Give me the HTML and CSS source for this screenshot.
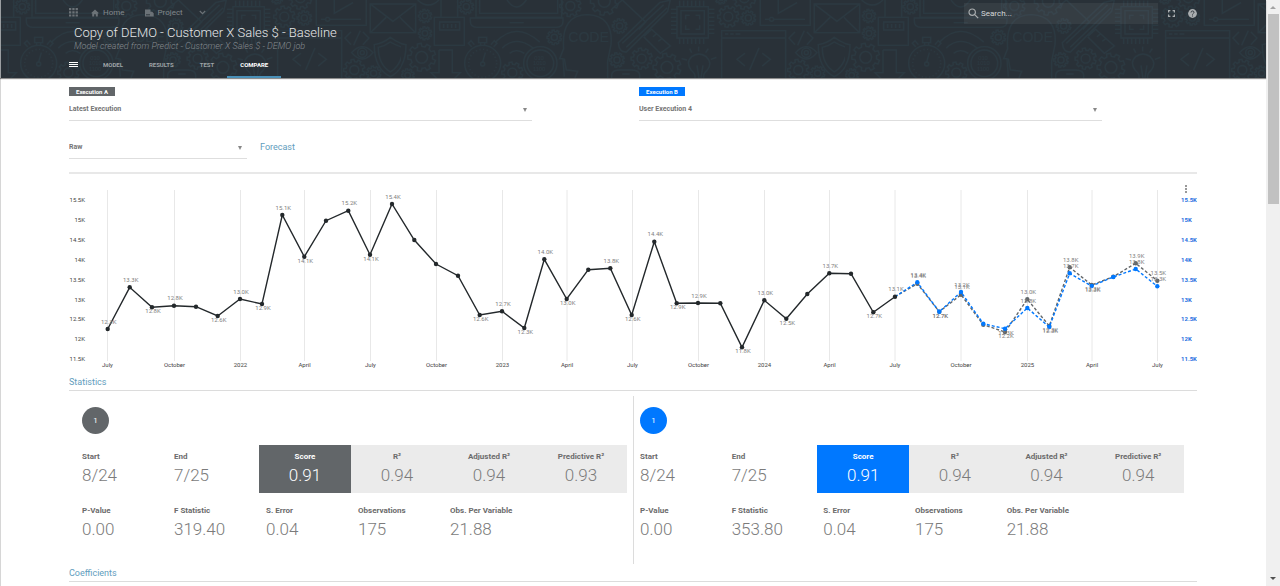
FILE: index.html
```html
<!DOCTYPE html>
<html lang="en">
<head>
<meta charset="utf-8">
<title>Copy of DEMO - Customer X Sales $ - Baseline</title>
<link rel="stylesheet" href="styles.css">
</head>
<body>
<div class="app">
  <div class="page">
    <header class="header">
      <svg class="header-art" aria-hidden="true">
        <defs>
          <pattern id="tech" width="444" height="78" patternUnits="userSpaceOnUse" patternTransform="translate(-44 0)">
            <g id="tech-tile" class="tile" transform="scale(.3333)">
              <path d="M1240 12h137v86h-137zM1240 12l68 52 69-52M1240 98l48-46M1377 98l-48-46M-93 12H44v86H-93M44 12L-24 64M44 98L-4 52"/>
              <path d="M50 0q32 30 64 0M120 0v52h50V0M100 52h90v84h-90zM116 66h60v24h-60zM128 72v12M140 72v12M152 72v12M164 72v12M114 150h40v68h24l-30 30M114 150v68H90l30 30"/>
              <path d="M225 0v52h257V0M236 0v40h234V0M208 54h278v10q0 18-20 18H228q-20 0-20-18zM326 68h42M318 0q28 42 58 0"/>
              <circle cx="245" cy="190" r="54"/><circle cx="245" cy="190" r="42" stroke-dasharray="3 8"/><circle cx="245" cy="192" r="6"/><path d="M245 186l8-28M233 112h24v16h-24zM239 128v10M251 128v10M212 140l-10-10 8-8 10 12M278 140l10-10-8-8-10 12"/>
              <path d="M284 126q62-64 132 0M304 144q42-40 92 0M326 160q20-16 44 0"/>
              <circle cx="418" cy="190" r="50"/><circle cx="418" cy="190" r="40"/>
              <path d="M490 230l-4-54h-10l12-30q-8-102 72-102 78 4 70 90l-10 50v50M490 176l6 34 34 4-8 20"/>
              <text x="502" y="126" class="tile-code">CODE</text>
              <text x="400" y="180" class="tile-bits">010</text><text x="396" y="196" class="tile-bits">1010</text><text x="396" y="212" class="tile-bits">1100</text>
              <path d="M652 128L776 8l32-8-8 34-124 122q-22 2-24-28zM664 130L788 14M676 142L798 24M640 20l24-20 70 66-20 22M730 108l22-20 56 50-30 22-50-50M756 110l10-8M772 124l10-8"/>
              <path d="M828 20h94v94h-94zM840 32h70v70h-70zM854 58V46h12M884 46h12v12M854 76v12h12M884 88h12V76M810 28h18M810 40h18M810 52h18M810 64h18M810 76h18M810 88h18M810 100h18M922 28h18M922 40h18M922 52h18M922 64h18M922 76h18M922 88h18M922 100h18M836 2v18M848 2v18M860 2v18M872 2v18M884 2v18M896 2v18M908 2v18M836 114v18M848 114v18M860 114v18M872 114v18M884 114v18M896 114v18M908 114v18"/>
              <path d="M632 234v-8q0-16 24-16h36q24 0 24 16v8M664 222h22M882 234q2-14-12-24-16-24 2-40 22-16 44 0 20 20 2 42-12 8-10 22M888 196l6 38M906 196l-6 38M893 140v14M866 146l6 12M922 146l-8 12M842 176l16 4M946 172l-16 6"/>
              <path d="M962 234V92h192v142M962 114h192M972 102h10M988 102h10M1004 102h14M1032 160l-24 18 24 20M1084 160l24 18-24 20M1074 144l-28 66"/>
              <path d="M1078 0v76h150V0M1132 0v40l56-32M1092 58h14M1118 58h94M1182 96l-18 18 18 20M1218 96l18 18-18 20M1210 92l-20 44M1184 158q32-36 64 0-32 38-64 0z"/>
              <circle cx="1112" cy="58" r="6"/><circle cx="1216" cy="158" r="14"/><circle cx="1216" cy="158" r="6"/>
              <path d="M1252 134q28-4 48-22 22 18 48 22 0 72-48 96-48-24-48-96zM1264 142q20-4 36-16 20 12 38 16-2 52-38 74-36-22-36-74zM-81 134Q-53 130-33 112-11 130 15 134q0 72-48 96"/>
            </g>
          </pattern>
        </defs>
        <rect width="100%" height="100%" fill="url(#tech)"/>
      </svg>
      <div class="topbar">
        <nav class="crumbs" aria-label="Breadcrumb">
          <button class="icon-btn" aria-label="Apps"><svg width="9" height="9" viewBox="0 0 9 9"><path d="M0 0h2.3v2.2H0zM3.3 0h2.3v2.2H3.3zM6.6 0h2.3v2.2H6.6zM0 3.2h2.3v2.2H0zM3.3 3.2h2.3v2.2H3.3zM6.6 3.2h2.3v2.2H6.6zM0 6.4h2.3v2.2H0zM3.3 6.4h2.3v2.2H3.3zM6.6 6.4h2.3v2.2H6.6z"/></svg></button>
          <a class="crumb crumb-home" href="#"><svg width="8" height="8" viewBox="0 0 8 8"><path d="M4 .5L0 4.3h1.2v3.2h2V5.2h1.6v2.3h2V4.3H8z"/></svg>Home</a>
          <a class="crumb crumb-project" href="#"><svg width="9" height="8" viewBox="0 0 9 8"><path d="M0 .5h5.5v2.300h1.700l1.500 1.500v3.200H0z"/><path class="cut" d="M1 5.800h4"/></svg>Project</a>
          <button class="icon-btn crumb-more" aria-label="More"><svg class="line" width="7" height="5" viewBox="0 0 7 5"><path d="M.8 1l2.7 2.6L6.2 1"/></svg></button>
        </nav>
        <div class="tools">
          <label class="search"><svg class="line" width="11" height="11" viewBox="0 0 11 11"><circle cx="4.2" cy="4.2" r="3.2"/><path d="M6.7 6.7l3.5 3.5"/></svg><input type="text" placeholder="Search..." aria-label="Search"></label>
          <button class="icon-btn" aria-label="Full screen"><svg class="line" width="7" height="7" viewBox="0 0 7 7"><path d="M.6 2.4V.6h1.8M4.6.6h1.8v1.8M6.4 4.6v1.8H4.6M2.4 6.4H.6V4.6"/></svg></button>
          <button class="icon-btn help" aria-label="Help"><svg width="9" height="9" viewBox="0 0 9 9"><circle cx="4.5" cy="4.5" r="4.4"/><path class="cut" d="M3 3.5q.1-1.5 1.5-1.5T6 3.3q0 .7-.8 1.2-.7.4-.7 1.1M4.500 6.500v1"/></svg></button>
        </div>
      </div>
      <h1 class="title">Copy of DEMO - Customer X Sales $ - Baseline</h1>
      <p class="subtitle">Model created from Predict - Customer X Sales $ - DEMO job</p>
      <nav class="tabs" aria-label="Sections">
        <button class="menu-btn" aria-label="Menu"><span></span><span></span><span></span></button>
        <a class="tab" href="#">MODEL</a><a class="tab" href="#">RESULTS</a><a class="tab" href="#">TEST</a><a class="tab tab-active" href="#">COMPARE</a>
      </nav>
    </header>

    <main class="content">
      <div class="executions">
        <div class="field">
          <label class="badge badge-a" for="exec-a">Execution A</label>
          <div class="select"><select id="exec-a"><option>Latest Execution</option></select><i></i></div>
        </div>
        <div class="field">
          <label class="badge badge-b" for="exec-b">Execution B</label>
          <div class="select"><select id="exec-b"><option>User Execution 4</option></select><i></i></div>
        </div>
      </div>
      <div class="view-row">
        <div class="select view-select"><select aria-label="Data view"><option>Raw</option></select><i></i></div>
        <a class="forecast" href="#">Forecast</a>
      </div>
      <hr class="rule">
      <section class="chart">
        <svg id="chart" viewBox="69 185 1128 188" role="img" aria-label="Forecast chart"></svg>
        <button class="chart-menu" aria-label="Chart menu"><span></span><span></span><span></span></button>
      </section>

      <h2 class="section-title">Statistics</h2>
      <div class="panels">
        <section class="panel panel-a">
          <div class="marker">1</div>
          <dl class="stats">
            <div><dt>Start</dt><dd>8/24</dd></div>
            <div><dt>End</dt><dd>7/25</dd></div>
            <div class="score"><dt>Score</dt><dd>0.91</dd></div>
            <div class="fit"><dt>R²</dt><dd>0.94</dd></div>
            <div class="fit"><dt>Adjusted R²</dt><dd>0.94</dd></div>
            <div class="fit"><dt>Predictive R²</dt><dd>0.93</dd></div>
            <div><dt>P-Value</dt><dd>0.00</dd></div>
            <div><dt>F Statistic</dt><dd>319.40</dd></div>
            <div><dt>S. Error</dt><dd>0.04</dd></div>
            <div><dt>Observations</dt><dd>175</dd></div>
            <div><dt>Obs. Per Variable</dt><dd>21.88</dd></div>
          </dl>
        </section>
        <section class="panel panel-b">
          <div class="marker">1</div>
          <dl class="stats">
            <div><dt>Start</dt><dd>8/24</dd></div>
            <div><dt>End</dt><dd>7/25</dd></div>
            <div class="score"><dt>Score</dt><dd>0.91</dd></div>
            <div class="fit"><dt>R²</dt><dd>0.94</dd></div>
            <div class="fit"><dt>Adjusted R²</dt><dd>0.94</dd></div>
            <div class="fit"><dt>Predictive R²</dt><dd>0.94</dd></div>
            <div><dt>P-Value</dt><dd>0.00</dd></div>
            <div><dt>F Statistic</dt><dd>353.80</dd></div>
            <div><dt>S. Error</dt><dd>0.04</dd></div>
            <div><dt>Observations</dt><dd>175</dd></div>
            <div><dt>Obs. Per Variable</dt><dd>21.88</dd></div>
          </dl>
        </section>
      </div>
      <h2 class="section-title">Coefficients</h2>
    </main>
  </div>
  <div class="scrollbar" aria-hidden="true"><i class="arrow-up"></i><div class="thumb"></div><i class="arrow-down"></i></div>
</div>
<script src="script.js"></script>
</body>
</html>
```
FILE: styles.css
```css
* { box-sizing: border-box; }
body { margin: 0; font-family: Roboto, "Liberation Sans", sans-serif; color: #6b6b6b; background: #fff; }
button { border: 0; padding: 0; background: none; font: inherit; color: inherit; cursor: pointer; }
a { color: inherit; text-decoration: none; }
svg { display: block; }

.app { display: flex; min-height: 100vh; }
.page { flex: 1; min-width: 0; border-left: 1px solid #d6d6d6; }

/* Header */
.header { position: relative; display: flex; flex-direction: column; height: 78px; margin-left: -1px; padding: 0 69px 0 68px; background: #293138; color: #8b9196; border-left: 1px solid #9a9ea1; box-shadow: 0 1px 1px rgba(0, 0, 0, .45); }
.header-art { position: absolute; inset: 0; width: 100%; height: 100%; }
.tile { fill: none; stroke: #2b3941; stroke-width: 4; }
.tile-code, .tile-bits { font-family: "Liberation Sans", sans-serif; fill: #2b3941; stroke: none; }
.tile-code { font-size: 42px; }
.tile-bits { font-size: 17px; }
.topbar, .title, .subtitle, .tabs { position: relative; }
.topbar { display: flex; justify-content: space-between; height: 25px; }
.crumbs { display: flex; align-items: center; font-size: 8px; color: #82888c; }
.crumbs svg { opacity: .75; }
.crumbs svg, .tools svg { fill: currentColor; }
.crumbs .line, .tools .line { fill: none; stroke: currentColor; stroke-width: 1.2; }
.cut { fill: none; stroke: #293138; stroke-width: .9; }
.crumb { display: flex; align-items: center; gap: 4px; }
.crumb-home { margin-left: 13px; }
.crumb-project { margin-left: 20px; }
.crumb-more { margin-left: 16px; }
.tools { display: flex; align-items: center; padding-top: 2px; color: #a9adaf; }
.help { margin-left: 13px; }
.search { display: flex; align-items: center; gap: 2px; width: 194px; height: 21px; margin-right: 10px; padding-left: 4px; background: rgba(255, 255, 255, .06); }
.search input { flex: 1; min-width: 0; border: 0; padding: 0; outline: 0; background: none; font: 8px/12px Roboto, sans-serif; color: #d4d6d7; }
.search input::placeholder { color: #d4d6d7; opacity: 1; }
.title { margin: 0 0 0 5px; font-size: 13px; line-height: 16px; font-weight: 300; color: #e6e8e9; }
.subtitle { margin: 0 0 0 5px; font-size: 9px; line-height: 10px; font-weight: 300; font-style: italic; color: #868c90; }
.tabs { display: flex; flex: 1; }
.menu-btn { display: flex; flex-direction: column; justify-content: center; gap: 1px; width: 9px; margin-right: 12px; }
.menu-btn span { height: 1px; width: 9px; background: #fff; }
.tab { display: flex; align-items: center; padding: 1px 13px 0; border-bottom: 2px solid transparent; font-size: 6px; font-weight: 700; color: #9da2a5; }
.tab-active { color: #fff; border-color: #4990b8; }

/* Filters */
.content { padding: 9px 69px 4px 68px; }
.executions { display: grid; grid-template-columns: 1fr 1fr; column-gap: 107px; padding-right: 95px; }
.field { display: flex; flex-direction: column; align-items: flex-start; gap: 4px; }
.badge { width: 46px; font-size: 6px; line-height: 9px; font-weight: 700; color: #fff; text-align: center; }
.badge-a { background: #626669; }
.badge-b { background: #0078ff; }
.select { display: grid; width: 100%; height: 21px; border-bottom: 1px solid #dedede; }
.select select, .select i { grid-area: 1 / 1; }
.select select { appearance: none; width: 100%; border: 0; padding: 0 12px 2px 0; outline: 0; background: none; font: 700 7px/18px Roboto, sans-serif; color: #757575; }
.select i { align-self: center; justify-self: end; margin-right: 5px; border: 2px solid transparent; border-top: 4px solid #888; border-bottom: 0; pointer-events: none; }
.view-row { display: flex; align-items: center; gap: 13px; margin-top: 17px; }
.view-select { width: 178px; }
.forecast { padding-bottom: 3px; font-size: 9px; color: #5f9dbd; }
.rule { height: 2px; margin: 13px 0 11px; border: 0; background: #e8e8e8; }

/* Chart */
.chart { position: relative; }
.chart > svg { width: 100%; height: auto; }
.chart text { font-family: Roboto, sans-serif; font-size: 6px; }
.grid-line { stroke: #e8e8e8; stroke-width: 1; }
.axis { fill: #444; text-anchor: middle; }
.axis-left { fill: #444; text-anchor: end; }
.axis-right { fill: #1f6fe0; font-weight: 700; }
.point-label { fill: #808080; text-anchor: middle; }
.series { fill: none; stroke-width: 1.4; }
.actual { stroke: #23282b; }
.forecast-a { stroke: #626669; stroke-dasharray: 3 2; }
.forecast-b { stroke: #0078ff; stroke-dasharray: 3 2; }
.dot-actual { fill: #23282b; }
.dot-a { fill: #626669; }
.dot-b { fill: #0078ff; }
.chart-menu { position: absolute; top: 0; right: 8px; display: grid; gap: 1px; width: 6px; justify-items: center; }
.chart-menu span { width: 2px; height: 2px; background: #999; }

/* Statistics */
.section-title { margin: 4px 0 0; padding-bottom: 2px; border-bottom: 1px solid #dcdcdc; font-size: 9px; line-height: 11px; font-weight: 400; color: #5f9dbd; }
.panels { display: grid; grid-template-columns: 1fr 1fr; margin-top: 5px; }
.panel { padding: 11px 6px 17px; }
.panel-b { padding: 11px 13px 17px 0; border-left: 1px solid #dcdcdc; }
.marker { display: grid; place-items: center; width: 27px; height: 27px; margin: 0 0 11px 6px; border-radius: 50%; font-size: 8px; color: #fff; }
.stats { display: grid; grid-template-columns: repeat(6, 1fr); row-gap: 6px; margin: 0; }
.stats > div { height: 48px; padding: 5px 0 0 6px; }
.panel-a .stats > div { padding-left: 7px; }
.panel-a .marker { margin-left: 7px; }
.stats dt { font-size: 8px; line-height: 13px; font-weight: 700; white-space: nowrap; }
.stats dd { margin: 2px 0 0; font-size: 17px; line-height: 20px; font-weight: 300; color: #7b7b7b; }
.stats > .score, .stats > .fit { text-align: center; }
.panel .stats > .score, .panel .stats > .fit { padding-left: 0; }
.stats .fit { background: #ebebeb; }
.stats .score, .stats .score dd { color: #fff; }
.panel-a .marker, .panel-a .score { background: #626669; }
.panel-b .marker, .panel-b .score { background: #0078ff; }

/* Scrollbar */
.scrollbar { display: flex; flex-direction: column; align-items: center; width: 14px; background: #f0f0f0; }
.thumb { width: 11px; height: 190px; background: #c1c1c1; }
.arrow-up, .arrow-down { border: 3px solid transparent; }
.arrow-up { margin: 6px 0 5px; border-top: 0; border-bottom-color: #a3a3a3; }
.arrow-down { margin: auto 0 6px; border-bottom: 0; border-top-color: #505050; }
```
FILE: script.js
```js
const NS = "http://www.w3.org/2000/svg";

function add(parent, name, attrs, text) {
  const el = document.createElementNS(NS, name);
  for (const key in attrs) el.setAttribute(key, attrs[key]);
  if (text) el.textContent = text;
  parent.appendChild(el);
  return el;
}

// Gears of the header pattern: centre x, centre y, outer radius
const tile = document.getElementById("tech-tile");
[[72, 48, 20], [72, 100, 20], [196, 20, 22], [62, 172, 42], [20, 226, 20], [334, 218, 32], [460, 112, 22],
 [508, 18, 32], [610, 4, 42], [656, 78, 22], [648, 180, 22], [722, 176, 32], [798, 202, 42], [982, 50, 32],
 [1042, 54, 22], [1030, -6, 34], [1192, 210, 32], [1250, 220, 22], [960, -6, 18]].forEach(([cx, cy, r]) => {
  const teeth = 9, pts = [];
  for (let i = 0; i < teeth; i++) {
    [[0, .78], [.2, .78], [.3, 1], [.7, 1], [.8, .78]].forEach(([step, k]) => {
      const a = (i + step) * 2 * Math.PI / teeth;
      pts.push((cx + r * k * Math.cos(a)).toFixed(1) + "," + (cy + r * k * Math.sin(a)).toFixed(1));
    });
  }
  add(tile, "polygon", { points: pts.join(" ") });
  add(tile, "circle", { cx, cy, r: r * .42 });
});

// Each point: x, y, label, label side ("a" above, "b" below)
const actual = [
  [107.7, 329, "12.3K", "a"], [129.7, 287.3, "13.3K", "a"], [152, 307.3, "12.8K", "b"], [174, 305.7, "12.8K", "a"],
  [196, 306.7], [217.7, 316, "12.6K", "b"], [240, 299, "13.0K", "a"], [262, 304, "12.9K", "b"],
  [282.3, 215, "15.1K", "a"], [304.3, 256.7, "14.1K", "b"], [326, 220.7], [348.3, 210.7, "15.2K", "a"],
  [370, 254.7, "14.1K", "b"], [392, 204, "15.4K", "a"], [414.3, 240], [436, 264], [458, 275.7],
  [479.7, 315, "12.6K", "b"], [502, 311.3, "12.7K", "a"], [524.3, 328, "12.3K", "b"], [544.3, 259.3, "14.0K", "a"],
  [566.7, 299, "13.0K", "b"], [588.3, 269.7], [610.3, 268.3, "13.8K", "a"], [631.7, 315, "12.6K", "b"],
  [654.3, 241.7, "14.4K", "a"], [676.7, 303.3, "12.9K", "b"], [698, 303, "12.9K", "a"], [720.3, 303.3],
  [742, 347.3, "11.8K", "b"], [764.3, 300.3, "13.0K", "a"], [786.3, 318.7, "12.5K", "b"], [807.3, 294],
  [829.3, 273.3, "13.7K", "a"], [851, 273.7], [873.3, 312.3, "12.7K", "b"], [895, 296.7, "13.1K", "a"]
];
const forecastA = [
  [895, 296.7], [917.3, 283.7, "13.4K", "a"], [939.3, 311.7, "12.7K", "b"], [961, 294.7, "13.1K", "a"],
  [983.3, 324.7], [1005, 332, "12.2K", "b"], [1027.3, 299.3, "13.0K", "a"], [1049.3, 326, "12.3K", "b"],
  [1069.7, 267.3, "13.8K", "a"], [1091.7, 285, "13.3K", "b"], [1113.3, 276.7], [1135.7, 263.3, "13.9K", "a"],
  [1157.3, 280.7, "13.5K", "a"]
];
const forecastB = [
  [895, 296.7], [917.3, 282.3, "13.4K", "a"], [939.3, 311.7, "12.7K", "b"], [961, 292, "13.2K", "a"],
  [983.3, 323.7], [1005, 328.7, "12.3K", "b"], [1027.3, 308, "12.8K", "a"], [1049.3, 327, "12.3K", "b"],
  [1069.7, 273.3, "13.7K", "a"], [1091.7, 286, "13.3K", "b"], [1113.3, 277], [1135.7, 269, "13.8K", "a"],
  [1157.3, 286.3, "13.3K", "a"]
];
const months = [
  [107.5, "July"], [174.5, "October"], [240.5, "2022"], [304.5, "April"], [370.5, "July"], [436.5, "October"],
  [502.5, "2023"], [567, "April"], [632.5, "July"], [698.5, "October"], [764.5, "2024"], [829.5, "April"],
  [895, "July"], [961, "October"], [1027.5, "2025"], [1092, "April"], [1157.5, "July"]
];

const chart = document.getElementById("chart");
months.forEach(([x, name]) => {
  add(chart, "line", { class: "grid-line", x1: x, x2: x, y1: 190, y2: 361 });
  add(chart, "text", { class: "axis", x, y: 367 }, name);
});
["15.5K", "15K", "14.5K", "14K", "13.5K", "13K", "12.5K", "12K", "11.5K"].forEach((label, i) => {
  const y = 202 + i * 19.9;
  add(chart, "text", { class: "axis-left", x: 85, y }, label);
  add(chart, "text", { class: "axis-right", x: 1181, y }, label);
});

function drawSeries(points, lineClass, dotClass, firstDot) {
  add(chart, "polyline", { class: "series " + lineClass, points: points.map(p => p[0] + "," + p[1]).join(" ") });
  points.slice(firstDot).forEach(([cx, cy]) => add(chart, "circle", { class: dotClass, cx, cy, r: 2.2 }));
}
function drawLabels(points) {
  points.filter(p => p[2]).forEach(([x, y, label, side]) =>
    add(chart, "text", { class: "point-label", x: x + 1, y: side === "a" ? y - 5.3 : y + 6 }, label));
}
drawSeries(forecastA, "forecast-a", "dot-a", 1);
drawSeries(forecastB, "forecast-b", "dot-b", 1);
drawSeries(actual, "actual", "dot-actual", 0);
drawLabels(forecastA);
drawLabels(forecastB);
drawLabels(actual);
```
